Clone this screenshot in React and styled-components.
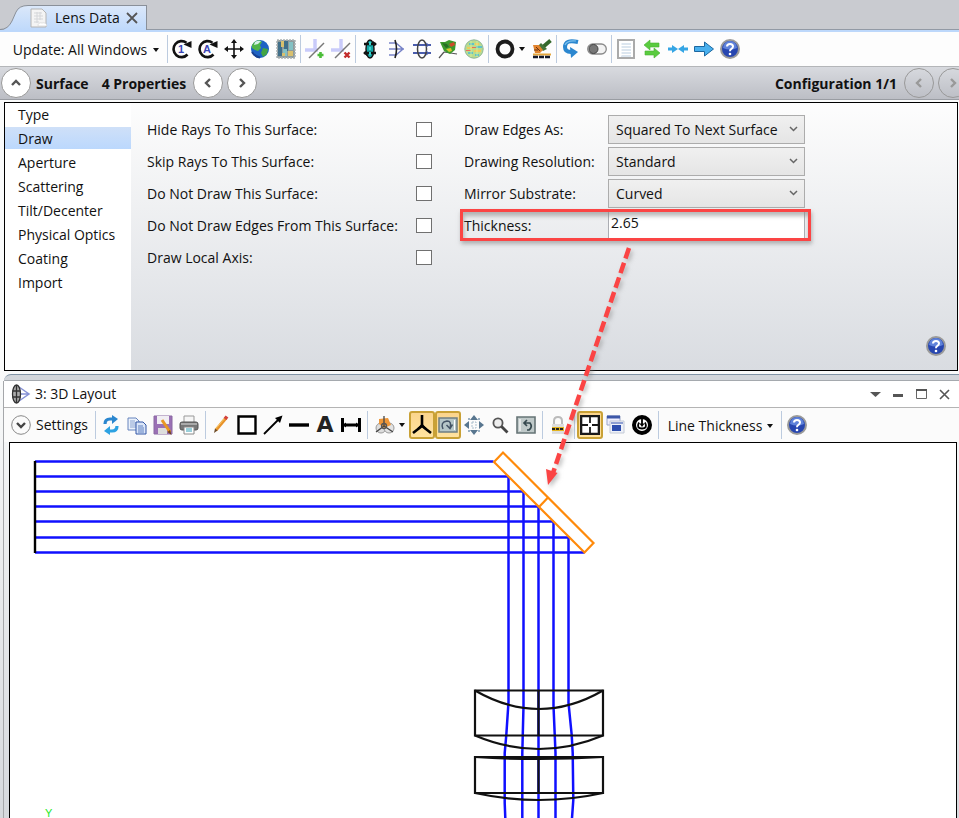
import React from 'react'
import styled, { createGlobalStyle } from 'styled-components'

const ink = '#111'
const blue = '#2b87cf'

const Icon = ({ children, size = 20 }) => (
  <svg width={size} height={size} viewBox='0 0 20 20' fill='none' aria-hidden='true'>
    {children}
  </svg>
)

const Caret = () => (
  <svg width='6' height='4' viewBox='0 0 6 4' aria-hidden='true'>
    <path d='M0 0h6L3 4z' fill={ink} />
  </svg>
)

const Chevron = ({ d, color = '#555' }) => (
  <svg width='12' height='12' viewBox='0 0 12 12' fill='none' aria-hidden='true'>
    <path d={d} stroke={color} strokeWidth='2.4' />
  </svg>
)

const up = 'M2 8l4-4 4 4'
const left = 'M8 2L4 6l4 4'
const right = 'M4 2l4 4-4 4'

const CycleIcon = ({ letter }) => (
  <Icon>
    <path d='M15.5 15.5A8 8 0 1 1 14.5 3.8' stroke={ink} strokeWidth='2.6' />
    <path d='M11.5 5.5L19.500 2v7z' fill={ink} />
    <text x='9' y='14' textAnchor='middle' fontSize='11' fontWeight='700' fontFamily='Liberation Sans, sans-serif' fill='#3a45b5'>
      {letter}
    </text>
  </Icon>
)

const CrossArrowsIcon = () => (
  <Icon>
    <path d='M10 2v16M2 10h16' stroke={ink} strokeWidth='1.600' />
    <path d='M10 0l3 4H7zM10 20l3-4H7zM0 10l4-3v6zM20 10l-4-3v6z' fill={ink} />
  </Icon>
)

const GlobeIcon = () => (
  <Icon>
    <circle cx='10' cy='10' r='9' fill='#1d62c4' />
    <path d='M2 6q2-4 7-5l3 2-2 3 1 3-3 3-3-1-3-2z' fill='#4fb548' />
    <path d='M13 9l5 1-1 5-4 3-2-4z' fill='#42a544' />
    <path d='M5 3q3-2 6-1L8 5 4 6z' fill='#d4f1e8' />
    <path d='M2 13q3 5 8 5.500' stroke='#174191' strokeWidth='2' />
  </Icon>
)

const MapIcon = () => (
  <Icon>
    <path d='M1 1h18v18H1z' fill='#8e9b9c' />
    <path d='M2 3h4v14H2zM8 2h4v10H8z' fill='#416f89' />
    <path d='M13 3h4v8h-4zM7 10h4v7H7z' fill='#83c1c4' />
    <path d='M5 2h3v6H5zM12 12h5v5h-5zM6 14h3v3H6z' fill='#d9c06e' />
    <path d='M1 1h18v18H1z' stroke='#aab1b2' strokeDasharray='2 1' strokeWidth='1.500' />
  </Icon>
)

const AxisIcon = ({ add }) => (
  <Icon>
    <path d='M10 0v12M0 11h13' stroke='#c9cbfa' strokeWidth='3.500' />
    <path d='M4 19L19 4' stroke='#777' strokeWidth='1.400' />
    {add ? (
      <path d='M15.500 13v6M12.500 16h6' stroke='#4bbd38' strokeWidth='2.600' />
    ) : (
      <path d='M13.500 13.500l5 5M18.500 13.500l-5 5' stroke='#c22b2b' strokeWidth='2.400' />
    )}
  </Icon>
)

const CylinderIcon = () => (
  <Icon>
    <ellipse cx='10' cy='10' rx='4' ry='9' fill='#16a5a5' stroke={ink} strokeWidth='1.400' />
    <path d='M4 5h12M4 14h12' stroke={ink} strokeWidth='2.400' />
    <path d='M13 2l4 3-4 3M7 11l-4 3 4 3' fill={ink} />
    <path d='M10 3v14' stroke='#39d5ce' strokeWidth='2' strokeDasharray='3 2' />
  </Icon>
)

const FocusIcon = () => (
  <Icon>
    <path d='M3 4h7l7 6-7 6H3M3 10h15' stroke='#7884c8' strokeWidth='1.500' />
    <path d='M9 1q3 9 0 18' stroke='#222' strokeWidth='1.600' />
  </Icon>
)

const LensRaysIcon = () => (
  <Icon>
    <path d='M1 6h18M1 14h18' stroke='#4a5dad' strokeWidth='2' />
    <ellipse cx='10' cy='10' rx='4.500' ry='9' stroke='#444' strokeWidth='1.500' />
    <path d='M14 4l3 2-3 2M14 12l3 2-3 2' stroke='#4a5dad' />
  </Icon>
)

const SurfacePlotIcon = () => (
  <Icon>
    <path d='M6 13L1 19M6 13l13 2' stroke='#555' strokeWidth='1.200' />
    <path d='M2 3l5 0 4-2 7 2-1 8-5 4-6-3z' fill='#3c9a2c' />
    <path d='M4 4l5 1 2 3-3 1z' fill='#266f24' />
    <path d='M11 5l5-2 1 3-4 2z' fill='#cf4a2a' />
    <path d='M8 10l5-1 1 3-3 1z' fill='#d7c52d' />
  </Icon>
)

const ColorMapIcon = () => (
  <Icon>
    <circle cx='10' cy='10' r='9.200' fill='#b9dc8e' stroke='#8fb59b' />
    <path d='M5 4h5v2H5zM12 7h6v2h-6zM4 13h5v2H4zM11 15h4v2h-4z' fill='#5fc3c9' />
    <path d='M3 8h6v2H3zM11 4h4v2h-4zM10 11h7v2h-7z' fill='#f0cc5c' />
    <path d='M2 11h5v1H2zM8 8h4v1H8z' fill='#ea6f58' />
    <path d='M7 2v16M13 2v16' stroke='#d9ef9e' strokeWidth='.800' />
  </Icon>
)

const RingIcon = () => (
  <Icon>
    <circle cx='10' cy='10' r='7.500' stroke='#1c1c1c' strokeWidth='3.800' />
  </Icon>
)

const BrushIcon = () => (
  <Icon>
    <path d='M18.500 1.500l-7 6' stroke='#33682b' strokeWidth='3.800' />
    <path d='M9 4l6 6-4 2-5-5z' fill='#44753a' />
    <path d='M1 6l6 0 4 5-3 3-5 0z' fill='#e2832e' />
    <path d='M4 8l4 4M2 11h4' stroke='#6b3210' />
    <path d='M1 15.500h18' stroke='#e5a63b' strokeWidth='2' />
    <path d='M1 18h18' stroke='#15182a' strokeWidth='2.600' strokeDasharray='5 1' />
  </Icon>
)

const ReturnIcon = () => (
  <Icon>
    <path d='M17 3Q4 0 4 8q0 5 6 5' stroke={blue} strokeWidth='4' />
    <path d='M9 8l8 5-7 6z' fill={blue} />
    <path d='M15 2Q6 1 4 6' stroke='#7cc1ee' strokeWidth='1.200' />
  </Icon>
)

const ToggleIcon = () => (
  <Icon>
    <rect x='.700' y='5' width='18.600' height='10' rx='5' fill='#f2f2f2' stroke='#8a8a8a' strokeWidth='1.300' />
    <circle cx='6.500' cy='10' r='4.500' fill='#777' stroke='#444' />
  </Icon>
)

const SheetIcon = () => (
  <Icon>
    <path d='M2 1h16v18H2z' fill='#fff' stroke='#aaa' strokeWidth='2' />
    <path d='M5 5h10M5 8h10M5 11h10M5 14h10M5 17h10' stroke='#b9cde0' />
    <path d='M5 4v13' stroke='#fff' strokeWidth='1' />
  </Icon>
)

const SwapIcon = () => (
  <Icon>
    <path d='M2 6l6-5v3h9v4H8v3zM18 14l-6-5v3H3v4h9v3z' fill='#5acb3f' stroke='#47b231' strokeWidth='.600' />
  </Icon>
)

const MeetIcon = () => (
  <Icon>
    <path d='M0 8.500h4V6l6 4-6 4v-2.500H0zM20 8.500h-4V6l-6 4 6 4v-2.500h4z' fill='#35a5e4' />
  </Icon>
)

const ForwardIcon = () => (
  <Icon>
    <path d='M.500 7.500h10V3l9 7-9 7v-4.500H.500z' fill='#49b0ee' stroke='#1c679f' />
  </Icon>
)

const HelpIcon = () => (
  <Icon>
    <circle cx='10' cy='10' r='9' fill='#2746b0' stroke='#9a9a9a' strokeWidth='2' />
    <path d='M3 9a7 7 0 0 1 14 0q-7 3-14 0z' fill='#5f82da' />
    <path d='M7 7.500q0-2.500 3-2.500t3 2.500q0 1.500-1.600 2.300Q10 10.500 10 12.200' stroke='#fff' strokeWidth='2' />
    <circle cx='10' cy='15' r='1.300' fill='#fff' />
  </Icon>
)

const DocIcon = () => (
  <Icon>
    <path d='M2 1h11l4 4v14H2z' fill='#f4f4f4' stroke='#b4b4b4' />
    <path d='M5 5h8M5 8h9M5 11h9M5 14h5M8 4v11M11 4v8' stroke='#d4d6d9' />
    <path d='M9 18q0-4 4-3 4-1 5 3z' fill='#fff' stroke='#ccc' strokeWidth='.600' />
  </Icon>
)

const LayoutIcon = () => (
  <Icon>
    <path d='M8 3l10 7-10 7M4 10h14' stroke='#8792d6' strokeWidth='1.500' />
    <ellipse cx='5.500' cy='10' rx='4' ry='9' fill='#aaa' stroke='#333' strokeWidth='1.300' />
    <path d='M5.500 1v18M1.500 7h8M1.500 13h8' stroke='#333' strokeWidth='1.300' />
  </Icon>
)

const RefreshIcon = () => (
  <Icon>
    <path d='M4 9q0-5 5-5h5' stroke={blue} strokeWidth='3.200' />
    <path d='M11 0l6 4-6 5z' fill={blue} />
    <path d='M16 11q0 5-5 5H7' stroke='#2da2e2' strokeWidth='3.200' />
    <path d='M9 11l-6 5 6 4z' fill='#2da2e2' />
  </Icon>
)

const CopyIcon = () => (
  <Icon>
    <path d='M1 3h8l3 3v9H1z' fill='#eaf1fb' stroke='#6784bd' />
    <path d='M3 6h5M3 8h6M3 10h6M3 12h6' stroke='#8ba4d2' />
    <path d='M9 7h7l3 3v9H9z' fill='#dbe6f8' stroke='#3257a6' />
    <path d='M11 11h5M11 13h6M11 15h6M11 17h6' stroke='#5e80c1' />
  </Icon>
)

const SaveIcon = () => (
  <Icon>
    <path d='M1 1h18v18H1z' fill='#9a70b5' stroke='#8a68a2' />
    <path d='M4 1h12v8H4z' fill='#f1eef4' />
    <path d='M5 13h9v6H5z' fill='#ddd' />
    <path d='M9 5l8 12' stroke='#e99722' strokeWidth='3' />
    <path d='M17 15l1.500 5-4-3z' fill='#724117' />
  </Icon>
)

const PrinterIcon = () => (
  <Icon>
    <path d='M5 1h10v7H5z' fill='#f6f6f6' stroke='#999' />
    <rect x='1' y='7' width='18' height='8' rx='2' fill='#777' stroke='#555' />
    <path d='M2 9h16' stroke='#bbb' strokeWidth='1.500' />
    <path d='M5 12h10v7H5z' fill='#fff' stroke='#888' />
    <path d='M7 14h6M7 16h6' stroke='#35a0b5' />
  </Icon>
)

const PencilIcon = () => (
  <Icon>
    <path d='M5 15L15 3' stroke='#e8922a' strokeWidth='3.200' />
    <path d='M4.500 14L14 3' stroke='#f8c964' strokeWidth='1' />
    <path d='M14 4l2-2.500' stroke='#d3423c' strokeWidth='3.600' />
    <path d='M3 18l1-4.500 2.500 2z' fill='#6b4a27' />
  </Icon>
)

const SquareIcon = () => (
  <Icon>
    <path d='M1.500 1.500h17v17h-17z' fill='#fff' stroke='#000' strokeWidth='2.400' />
  </Icon>
)

const DiagonalIcon = () => (
  <Icon>
    <path d='M1 19L16 4' stroke='#000' strokeWidth='1.800' />
    <path d='M19.500 .500l-2.500 7.500-5-5z' fill='#000' />
  </Icon>
)

const LineIcon = () => (
  <Icon>
    <path d='M0 10h20' stroke='#000' strokeWidth='3.400' />
  </Icon>
)

const TextIcon = () => (
  <Icon>
    <text x='10' y='17' textAnchor='middle' fontSize='22' fontWeight='700' fontFamily='DejaVu Sans, sans-serif' fill='#222'>
      A
    </text>
  </Icon>
)

const DimensionIcon = () => (
  <Icon>
    <path d='M1.500 3v14M18.500 3v14' stroke='#000' strokeWidth='3' />
    <path d='M2 10h16' stroke='#000' strokeWidth='3' />
    <path d='M2 10l3-2.500v5zM18 10l-3-2.500v5z' fill='#000' />
  </Icon>
)

const ViewIcon = () => (
  <Icon>
    <circle cx='6' cy='13' r='5' fill='#ddd' stroke='#999' />
    <circle cx='14' cy='13' r='5' fill='#e3e3e3' stroke='#999' />
    <path d='M4 4l9-1 3 7-7 3-5-4z' fill='#ed9638' />
    <path d='M9 1v10M9 11l-8 6M9 11l9 6' stroke='#444' strokeWidth='1.300' />
    <circle cx='9' cy='11' r='2.500' stroke='#555' strokeWidth='1.300' />
  </Icon>
)

const TripodIcon = () => (
  <Icon>
    <path d='M10 0v11M10 11l-9 7M10 11l9 7' stroke='#000' strokeWidth='2.600' />
    <path d='M6 14l4-4 4 4' stroke='#000' strokeWidth='2' />
  </Icon>
)

const RotateIcon = () => (
  <Icon>
    <path d='M1 3h18v14H1z' fill='#b6c7c8' stroke='#6f7f82' strokeWidth='1.500' />
    <path d='M5 14q-3-7 4-8 5 0 3 7' stroke='#456' strokeWidth='1.500' />
    <path d='M8.500 10l3.500 3.500 2.500-4' stroke='#456' strokeWidth='1.500' />
    <path d='M16.500 5v10' stroke='#fff' />
  </Icon>
)

const MoveIcon = () => (
  <Icon>
    <path d='M10 0l4 5H6zM10 20l4-5H6zM0 10l5-4v8zM20 10l-5-4v8z' fill='#58768f' />
    <path d='M8 7h4v6H8z' stroke='#a8bdcc' strokeDasharray='2 1' />
    <path d='M4 4h2M14 4h2M4 16h2M14 16h2' stroke='#9bb1c3' strokeWidth='2' />
  </Icon>
)

const ZoomIcon = () => (
  <Icon>
    <circle cx='8' cy='8' r='4.600' fill='#eee' stroke='#555' strokeWidth='1.800' />
    <path d='M11.500 11.500l6 6' stroke='#444' strokeWidth='2.800' />
  </Icon>
)

const ResetIcon = () => (
  <Icon>
    <path d='M1 2h18v16H1z' fill='#bfc9c9' stroke='#667476' strokeWidth='1.600' />
    <path d='M4 4v12' stroke='#f2f2f2' strokeWidth='1.500' />
    <path d='M8 8h6q3 4-1 7h-2M11 5L8 8l3 3' stroke='#35484e' strokeWidth='1.700' />
  </Icon>
)

const LockIcon = () => (
  <Icon>
    <path d='M6 10V6q0-4 4-4t4 4v4' stroke='#bbb' strokeWidth='2' />
    <path d='M4 9h12v10H4z' fill='#ddd' />
    <path d='M4 12h12v4H4z' fill='#e4b51f' />
    <path d='M4 14h12' stroke='#222' strokeWidth='2' strokeDasharray='3 1' />
  </Icon>
)

const FrameIcon = () => (
  <Icon>
    <path d='M1 1h18v18H1z' fill='#fff' stroke='#1a1a1a' strokeWidth='2.600' />
    <path d='M10 2v6M10 12v6M2 10h6M12 10h6' stroke='#1a1a1a' strokeWidth='1.800' />
  </Icon>
)

const CascadeIcon = () => (
  <Icon>
    <path d='M1 1h13v9H1z' fill='#eef' stroke='#99a5c8' />
    <path d='M1 2h13' stroke='#3d57a8' strokeWidth='3' />
    <path d='M4 6h14v12H4z' fill='#eef1f8' stroke='#c3c9d6' />
    <path d='M5 8h12' stroke='#8fa0d2' strokeWidth='2' />
    <path d='M6 10h9v6H6z' fill='#2f4fae' />
  </Icon>
)

const TargetIcon = () => (
  <Icon>
    <circle cx='10' cy='10' r='8' fill='#fff' stroke='#000' strokeWidth='4' />
    <path d='M7 7.500q-3 6 3 6 6 0 3-6M10 4v6' stroke='#000' strokeWidth='1.800' />
    <path d='M7.500 8.500h5L10 12z' fill='#000' />
  </Icon>
)

const topTools = [
  [
    ['Update once', <CycleIcon letter='1' />],
    ['Update all', <CycleIcon letter='A' />],
    ['Move', <CrossArrowsIcon />],
    ['Globe', <GlobeIcon />],
    ['Map', <MapIcon />],
  ],
  [
    ['Add axis', <AxisIcon add />],
    ['Remove axis', <AxisIcon />],
  ],
  [
    ['Element', <CylinderIcon />],
    ['Focus', <FocusIcon />],
    ['Lens rays', <LensRaysIcon />],
    ['Surface plot', <SurfacePlotIcon />],
    ['Color map', <ColorMapIcon />],
  ],
  [
    ['Aperture', <RingIcon />, 'menu'],
    ['Brush', <BrushIcon />],
  ],
  [
    ['Return', <ReturnIcon />],
    ['Toggle', <ToggleIcon />],
  ],
  [
    ['Sheet', <SheetIcon />],
    ['Swap', <SwapIcon />],
    ['Fit columns', <MeetIcon />],
    ['Go', <ForwardIcon />],
    ['Help', <HelpIcon />],
  ],
]

const layoutTools = [
  [
    ['Refresh', <RefreshIcon />],
    ['Copy', <CopyIcon />],
    ['Save', <SaveIcon />],
    ['Print', <PrinterIcon />],
  ],
  [
    ['Pencil', <PencilIcon />],
    ['Rectangle', <SquareIcon />],
    ['Arrow', <DiagonalIcon />],
    ['Line', <LineIcon />],
    ['Text', <TextIcon />],
    ['Dimension', <DimensionIcon />],
  ],
  [
    ['View', <ViewIcon />, 'menu'],
    ['Axes', <TripodIcon />, 'active'],
    ['Rotate', <RotateIcon />, 'active'],
    ['Pan', <MoveIcon />],
    ['Zoom', <ZoomIcon />],
    ['Reset', <ResetIcon />],
  ],
  [['Lock', <LockIcon />]],
  [
    ['Frame', <FrameIcon />, 'active'],
    ['Windows', <CascadeIcon />],
    ['Target', <TargetIcon />],
  ],
]

const ToolGroups = ({ groups, wide }) =>
  groups.map((group, i) => (
    <React.Fragment key={i}>
      <Separator $wide={wide} />
      {group.map(([label, icon, kind]) => (
        <ToolButton key={label} aria-label={label} $menu={kind === 'menu'} $active={kind === 'active'}>
          {icon}
          {kind === 'menu' && <Caret />}
        </ToolButton>
      ))}
    </React.Fragment>
  ))

const sections = ['Type', 'Draw', 'Aperture', 'Scattering', 'Tilt/Decenter', 'Physical Optics', 'Coating', 'Import']

const flags = [
  'Hide Rays To This Surface:',
  'Skip Rays To This Surface:',
  'Do Not Draw This Surface:',
  'Do Not Draw Edges From This Surface:',
  'Draw Local Axis:',
]

const choices = [
  ['Draw Edges As:', 'Squared To Next Surface'],
  ['Drawing Resolution:', 'Standard'],
  ['Mirror Substrate:', 'Curved'],
]

const Properties = () => (
  <Panel>
    <Sections>
      {sections.map((name) => (
        <SectionButton key={name} $selected={name === 'Draw'}>
          {name}
        </SectionButton>
      ))}
    </Sections>
    <Fields>
      <Flags>
        {flags.map((text, i) => (
          <Row key={text}>
            <label htmlFor={`flag-${i}`}>{text}</label>
            <CheckBox id={`flag-${i}`} type='checkbox' />
          </Row>
        ))}
      </Flags>
      <Choices>
        {choices.map(([text, value], i) => (
          <Row key={text}>
            <label htmlFor={`choice-${i}`}>{text}</label>
            <SelectBox>
              <Select id={`choice-${i}`} defaultValue={value}>
                <option>{value}</option>
              </Select>
              <svg width='9' height='6' viewBox='0 0 9 6' fill='none' aria-hidden='true'>
                <path d='M1 1l3.500 3.500L8 1' stroke='#666' strokeWidth='1.500' />
              </svg>
            </SelectBox>
          </Row>
        ))}
        <Row>
          <label htmlFor='thickness'>Thickness:</label>
          <TextBox id='thickness' defaultValue='2.65' />
          <Highlight />
          <Pointer width='110' height='250' viewBox='0 0 110 250' aria-hidden='true'>
            <path d='M91 3L15 228' stroke='#fb4444' strokeWidth='4.500' strokeDasharray='11 4.500' fill='none' />
            <path d='M8 224l11.500 4-9.500 12z' fill='#fb4444' />
          </Pointer>
        </Row>
      </Choices>
      <HelpButton aria-label='Help'>
        <HelpIcon />
      </HelpButton>
    </Fields>
  </Panel>
)

const rays = [461.5, 476.5, 491.5, 506.5, 521.5, 537.5, 552.5]

const Drawing = () => (
  <svg width='946' height='375' viewBox='10 443 946 375' fill='none'>
    <g stroke='#1010ff' strokeWidth='2.500'>
      {rays.map((y) => (
        <path key={y} d={`M35 ${y}H${y + 32}`} />
      ))}
      <path d='M508.500 477V702L506.300 735L504.700 753V803L505.300 818' />
      <path d='M523.500 492V706L522.300 753V818' />
      <path d='M538.500 507V818' />
      <path d='M553.500 522V706L555.500 753V818' />
      <path d='M568.500 537V703L571.700 735L572.700 753L573.300 800L572 818' />
    </g>
    <path d='M35 461v92' stroke='#000' strokeWidth='2.400' />
    <g stroke='#ff8a0a' strokeWidth='2.200'>
      <path d='M494 462l9-9.500L593.500 543l-9 9.500z' />
      <path d='M539 507l9-9.500' />
    </g>
    <g stroke='#111' strokeWidth='2.200'>
      <path d='M475 690.500h128v45H475z' />
      <path d='M475 690.500q64 37 128 0M475 735.500q64 27 128 0' />
      <path d='M538.500 690v46M538.500 757v35' />
      <path d='M475 757h128v36H475z' />
      <path d='M475 757q64 4 128 0M475 793q64 14 128 0' />
    </g>
    <text x='45' y='817' fontSize='11' fontFamily='Liberation Sans, sans-serif' fill='#1fe81f'>
      Y
    </text>
  </svg>
)

const App = () => (
  <Page>
    <GlobalStyle />
    <TabStrip>
      <svg width='28' height='25' viewBox='0 0 28 25' aria-hidden='true'>
        <defs>
          <linearGradient id='tab' x1='0' y1='0' x2='0' y2='1'>
            <stop offset='0' stopColor='#dbe8fa' />
            <stop offset='1' stopColor='#bfd9fb' />
          </linearGradient>
        </defs>
        <path d='M0 25q8 0 12-9l4-9Q19 .500 28 .500V25z' fill='url(#tab)' />
        <path d='M0 24.500q8 0 12-8.500l4-9Q19 .500 28 .500' fill='none' stroke='#8a9099' />
      </svg>
      <Tab>
        <DocIcon />
        <span>Lens Data</span>
        <PlainButton aria-label='Close tab'>
          <svg width='12' height='12' viewBox='0 0 12 12'>
            <path d='M1 1l10 10M11 1L1 11' stroke='#555' strokeWidth='1.800' />
          </svg>
        </PlainButton>
      </Tab>
    </TabStrip>
    <Toolbar>
      <UpdateButton>
        Update: All Windows <Caret />
      </UpdateButton>
      <ToolGroups groups={topTools} />
    </Toolbar>
    <SurfaceBar>
      <RoundButton aria-label='Collapse'>
        <Chevron d={up} />
      </RoundButton>
      <strong>Surface</strong>
      <Count>4 Properties</Count>
      <RoundButton aria-label='Previous surface'>
        <Chevron d={left} />
      </RoundButton>
      <RoundButton aria-label='Next surface'>
        <Chevron d={right} />
      </RoundButton>
      <Configuration>
        <strong>Configuration 1/1</strong>
        <RoundButton aria-label='Previous configuration' disabled>
          <Chevron d={left} color='#999' />
        </RoundButton>
        <RoundButton aria-label='Next configuration' disabled>
          <Chevron d={right} color='#999' />
        </RoundButton>
      </Configuration>
    </SurfaceBar>
    <Properties />
    <Splitter />
    <Window>
      <TitleBar>
        <LayoutIcon />
        <span>3: 3D Layout</span>
        <WindowButtons>
          <PlainButton aria-label='Menu'>
            <svg width='11' height='12' viewBox='0 0 11 12'>
              <path d='M0 4h11L5.500 9z' fill='#555' />
            </svg>
          </PlainButton>
          <PlainButton aria-label='Minimize'>
            <svg width='11' height='12' viewBox='0 0 11 12'>
              <path d='M0 6h10v3H0z' fill='#555' />
            </svg>
          </PlainButton>
          <PlainButton aria-label='Maximize'>
            <svg width='11' height='12' viewBox='0 0 11 12' fill='none'>
              <path d='M.500 2h10v8.500H.500z' stroke='#666' />
              <path d='M0 2h11' stroke='#555' strokeWidth='2' />
            </svg>
          </PlainButton>
          <PlainButton aria-label='Close'>
            <svg width='11' height='12' viewBox='0 0 11 12'>
              <path d='M1 2l9 9M10 2l-9 9' stroke='#555' strokeWidth='1.600' />
            </svg>
          </PlainButton>
        </WindowButtons>
      </TitleBar>
      <LayoutToolbar>
        <SettingsButton>
          <svg width='20' height='20' viewBox='0 0 20 20' fill='none' aria-hidden='true'>
            <circle cx='10' cy='10' r='9.300' stroke='#888' />
            <path d='M6 8l4 4 4-4' stroke='#444' strokeWidth='2.400' />
          </svg>
          Settings
        </SettingsButton>
        <ToolGroups groups={layoutTools} wide />
        <Separator $wide />
        <ThicknessButton>
          Line Thickness <Caret />
        </ThicknessButton>
        <Separator $wide />
        <ToolButton aria-label='Layout help'>
          <HelpIcon />
        </ToolButton>
      </LayoutToolbar>
      <Canvas>
        <Drawing />
      </Canvas>
    </Window>
  </Page>
)

export default App

const GlobalStyle = createGlobalStyle`
  * {
    box-sizing: border-box;
  }
  body {
    margin: 0;
    overflow: hidden;
  }
  body, button, input, select {
    font-family: 'Open Sans', 'Noto Sans', sans-serif;
    font-size: 14px;
    line-height: 20px;
    color: #111;
  }
  svg {
    display: block;
    flex: none;
  }
`

const Page = styled.div`
  display: flex;
  flex-direction: column;
  height: 100vh;
  background: linear-gradient(#fafbfb 45%, #d6d9dd);
`

const PlainButton = styled.button`
  display: flex;
  align-items: center;
  justify-content: center;
  padding: 0;
  border: 0;
  background: none;
`

const TabStrip = styled.div`
  display: flex;
  align-items: flex-end;
  flex: none;
  height: 32px;
  border-bottom: 2px solid #bdd8fb;
  background: linear-gradient(#c9cbd0 29px, #929aa5 29px);
`

const Tab = styled.div`
  display: flex;
  align-items: center;
  gap: 6px;
  height: 25px;
  padding: 0 8px 0 1px;
  border-top: 1px solid #8a9099;
  border-right: 1px solid #8a9099;
  background: linear-gradient(#dbe8fa, #bfd9fb);
`

const Toolbar = styled.div`
  display: flex;
  align-items: center;
  flex: none;
  height: 35px;
  border-bottom: 1px solid #b4b6b9;
  background: #fdfdfd;
`

const UpdateButton = styled(PlainButton)`
  gap: 6px;
  width: 166px;
  padding: 2px 0 0 6px;
  white-space: nowrap;
`

const Separator = styled.span`
  flex: none;
  width: 1px;
  height: 28px;
  margin: ${({ $wide }) => ($wide ? '0 2px 0 3px' : '0 1px')};
  background: #bccbdf;
`

const ToolButton = styled(PlainButton)`
  flex: none;
  gap: 4px;
  width: ${({ $menu }) => ($menu ? '39px' : '26px')};
  height: 28px;
  border: ${({ $active }) => ($active ? '2px solid #c9a136' : '0')};
  border-radius: 3px;
  background: ${({ $active }) => ($active ? 'linear-gradient(#fbd58d, #ffe3a0)' : 'none')};
`

const SurfaceBar = styled.div`
  display: flex;
  align-items: center;
  flex: none;
  gap: 4px;
  height: 33px;
  padding-left: 1px;
  overflow: hidden;
  border-bottom: 1px solid #999ca2;
  background: linear-gradient(#d8dadf, #bcbec5);
  white-space: nowrap;
  strong {
    padding: 2px 0 0 1px;
  }
`

const RoundButton = styled(PlainButton)`
  flex: none;
  width: 30px;
  height: 30px;
  border: 1px solid #999;
  border-radius: 50%;
  background: ${({ disabled }) => (disabled ? 'none' : '#fff')};
`

const Count = styled.strong`
  margin: 0 3px 0 8px;
`

const Configuration = styled.div`
  display: flex;
  align-items: center;
  gap: 4px;
  margin: 0 -9px 0 auto;
  strong {
    margin-right: 3px;
  }
`

const Panel = styled.section`
  display: flex;
  flex: none;
  height: 269px;
  margin: 2px 1px 0 4px;
  border: 1px solid #000;
`

const Sections = styled.nav`
  flex: none;
  width: 126px;
  background: #fff;
`

const SectionButton = styled.button`
  display: block;
  width: 100%;
  height: 24px;
  padding: 0 0 0 13px;
  border: solid #fff;
  border-width: 0 0 2px;
  background: ${({ $selected }) => ($selected ? 'linear-gradient(#cfe0f8, #bbd8fd)' : '#fff')};
  line-height: 24px;
  text-align: left;
`

const Fields = styled.div`
  position: relative;
  display: flex;
  flex: 1;
  gap: 32px;
  padding: 10px 16px;
  background: linear-gradient(#fdfdfd, #d9dce1);
  white-space: nowrap;
`

const Row = styled.div`
  position: relative;
  display: flex;
  align-items: center;
  height: 32px;
  label {
    padding-top: 2px;
  }
`

const Flags = styled.div`
  width: 285px;
  ${Row} {
    justify-content: space-between;
  }
`

const Choices = styled.div`
  width: 341px;
  label {
    width: 144px;
  }
`

const CheckBox = styled.input`
  appearance: none;
  width: 16px;
  height: 15px;
  margin: 0;
  border: 1px solid #707070;
  background: #fff;
`

const SelectBox = styled.div`
  position: relative;
  flex: 1;
  svg {
    position: absolute;
    top: 11px;
    right: 7px;
  }
`

const Select = styled.select`
  display: block;
  appearance: none;
  width: 100%;
  height: 29px;
  padding: 2px 7px 0;
  border: 1px solid #acacac;
  border-radius: 0;
  background: linear-gradient(#f0f0f0, #e5e5e5);
`

const TextBox = styled.input`
  flex: 1;
  min-width: 0;
  height: 28px;
  padding: 0 2px 6px;
  border: 1px solid #abadb3;
  background: #fff;
`

const Highlight = styled.div`
  position: absolute;
  inset: 0 -6px 0 -4px;
  border: 3px solid #fb4444;
  box-shadow: 1px 3px 4px #8889, inset 1px 4px 4px #8889;
  pointer-events: none;
`

const Pointer = styled.svg`
  position: absolute;
  top: 36px;
  left: 74px;
  z-index: 1;
  filter: drop-shadow(2px 3px 2px #8888);
  pointer-events: none;
`

const HelpButton = styled(PlainButton)`
  position: absolute;
  right: 11px;
  bottom: 14px;
`

const Splitter = styled.div`
  flex: none;
  height: 7px;
  margin: 3px 0 0 4px;
  border-top: 1px solid #8194a6;
  border-bottom: 1px solid #a5a9ae;
  border-top-left-radius: 7px;
  background: #d2d6db;
`

const Window = styled.section`
  display: flex;
  flex-direction: column;
  flex: 1;
  min-height: 0;
  margin-left: 3px;
  border-left: 1px solid #a5a7aa;
`

const TitleBar = styled.header`
  display: flex;
  align-items: center;
  flex: none;
  gap: 4px;
  height: 27px;
  padding-left: 7px;
  border-bottom: 1px solid #b4b4b4;
  background: #fff;
`

const WindowButtons = styled.div`
  display: flex;
  gap: 12px;
  margin: 0 9px 0 auto;
`

const LayoutToolbar = styled.div`
  display: flex;
  align-items: center;
  flex: none;
  height: 34px;
  background: #fbfbfb;
`

const SettingsButton = styled(PlainButton)`
  flex: none;
  justify-content: flex-start;
  gap: 5px;
  width: 88px;
  padding-left: 7px;
`

const ThicknessButton = styled(PlainButton)`
  flex: none;
  gap: 5px;
  width: 117px;
  padding: 2px 0 0 2px;
  white-space: nowrap;
`

const Canvas = styled.main`
  flex: 1;
  min-height: 0;
  margin: 0 2px 0 5px;
  overflow: hidden;
  border: 1px solid #000;
  border-bottom: 0;
  background: #fff;
`
